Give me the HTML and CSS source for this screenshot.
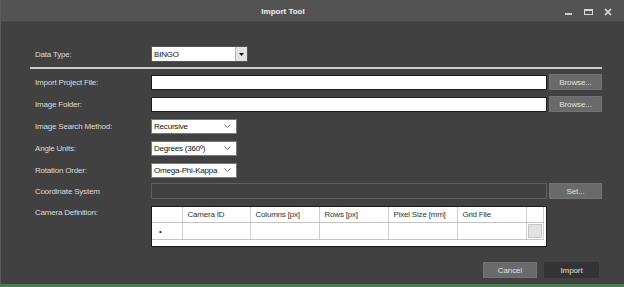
FILE: index.html
```html
<!DOCTYPE html>
<html lang="en">
<head>
    <meta charset="UTF-8">
    <title>Import Tool</title>
    <link rel="stylesheet" href="styles.css">
</head>
<body>

<div class="window">
    <div class="titlebar">
        <span class="title">Import Tool</span>
        <div class="controls">
            <svg width="8" height="8" viewBox="0 0 8 8"><rect x="0" y="5" width="7" height="2" fill="#cfcfcf"/></svg>
            <svg width="9" height="8" viewBox="0 0 9 8"><rect x="0.5" y="1.5" width="8" height="5" fill="none" stroke="#d8d8d8" stroke-width="1"/><rect x="0" y="1" width="9" height="2" fill="#d8d8d8"/></svg>
            <svg width="8" height="8" viewBox="0 0 8 8"><path d="M1 1 L7 7 M7 1 L1 7" stroke="#e0e0e0" stroke-width="1.6"/></svg>
        </div>
    </div>

    <div class="content">
        <div class="row">
            <label>Data Type:</label>
            <div class="combo combo-type">
                <span class="value">BINGO</span>
                <span class="drop"><svg width="5" height="3" viewBox="0 0 5 3"><path d="M0 0 H5 L2.5 3 Z" fill="#111"/></svg></span>
            </div>
        </div>

        <div class="sep"></div>

        <div class="row first">
            <label>Import Project File:</label>
            <div class="field"></div>
            <button class="btn">Browse...</button>
        </div>
        <div class="row">
            <label>Image Folder:</label>
            <div class="field"></div>
            <button class="btn">Browse...</button>
        </div>
        <div class="row">
            <label>Image Search Method:</label>
            <div class="combo combo-small">
                <span class="value">Recursive</span>
                <svg class="chev" width="7" height="4" viewBox="0 0 7 4"><path d="M0.5 0.5 L3.5 3.5 L6.5 0.5" fill="none" stroke="#6a6a6a" stroke-width="1"/></svg>
            </div>
        </div>
        <div class="row">
            <label>Angle Units:</label>
            <div class="combo combo-small">
                <span class="value">Degrees (360º)</span>
                <svg class="chev" width="7" height="4" viewBox="0 0 7 4"><path d="M0.5 0.5 L3.5 3.5 L6.5 0.5" fill="none" stroke="#6a6a6a" stroke-width="1"/></svg>
            </div>
        </div>
        <div class="row">
            <label>Rotation Order:</label>
            <div class="combo combo-small">
                <span class="value">Omega-Phi-Kappa</span>
                <svg class="chev" width="7" height="4" viewBox="0 0 7 4"><path d="M0.5 0.5 L3.5 3.5 L6.5 0.5" fill="none" stroke="#6a6a6a" stroke-width="1"/></svg>
            </div>
        </div>
        <div class="row tight">
            <label>Coordinate System</label>
            <div class="field field-off"></div>
            <button class="btn">Set...</button>
        </div>

        <div class="row row-table">
            <label>Camera Definition:</label>
            <div class="grid-wrap">
                <table class="grid">
                    <colgroup>
                        <col style="width:30px">
                        <col style="width:68px">
                        <col style="width:69px">
                        <col style="width:69px">
                        <col style="width:69px">
                        <col style="width:69px">
                        <col style="width:17px">
                        <col>
                    </colgroup>
                    <tr class="head">
                        <td></td>
                        <td>Camera ID</td>
                        <td>Columns [px]</td>
                        <td>Rows [px]</td>
                        <td>Pixel Size [mm]</td>
                        <td>Grid File</td>
                        <td></td>
                        <td class="blank"></td>
                    </tr>
                    <tr class="data">
                        <td class="rowhead">•</td>
                        <td></td>
                        <td></td>
                        <td></td>
                        <td></td>
                        <td></td>
                        <td class="cellbtn"><span></span></td>
                        <td class="blank"></td>
                    </tr>
                </table>
            </div>
        </div>

        <div class="actions">
            <button class="btn btn-cancel">Cancel</button>
            <button class="btn btn-import">Import</button>
        </div>
    </div>
</div>

</body>
</html>
```

FILE: styles.css
```css
body {
    margin: 0;
    padding: 0;
    background-color: #4d7a55;
    font-family: "Liberation Sans", Arial, sans-serif;
    font-size: 8px;
    letter-spacing: -0.2px;
}
.window {
    width: 623px;
    height: 284px;
    background-color: #414141;
    border-left: 1px solid #5c5c5c;
    overflow: hidden;
}
.titlebar {
    height: 22px;
    background-color: #535353;
    border-bottom: 1px solid #4a4a4a;
    box-sizing: border-box;
    display: flex;
    align-items: center;
}
.title {
    flex: 1;
    text-align: center;
    color: #f2f2f2;
    font-weight: bold;
    font-size: 8px;
    letter-spacing: 0;
    padding-top: 2px;
}
.controls {
    width: 59px;
    display: flex;
    align-items: center;
    gap: 11px;
    padding-top: 3px;
}
.content {
    padding: 24px 0 0 29px;
}
.row {
    display: grid;
    grid-template-columns: 119px 396px 53px;
    column-gap: 2px;
    align-items: center;
    height: 16px;
    margin-top: 6px;
}
.row:first-child {
    margin-top: 0;
}
.row.first,
.row.tight {
    margin-top: 5px;
}
.row label {
    color: #dcdcdc;
    padding-left: 5px;
}
.sep {
    width: 572px;
    height: 2px;
    background-color: #cdcdcd;
    margin-top: 5px;
}
.field {
    height: 15px;
    background-color: #fff;
    border: 1px solid #1c1c1c;
    box-sizing: border-box;
}
.field-off {
    height: 16px;
    background-color: #414141;
    border: 1px solid #5e5e5e;
}
.btn {
    height: 16px;
    padding: 0;
    background-color: #6a6a6a;
    border: 1px solid #737373;
    color: #e0e0e0;
    font-family: "Liberation Sans", Arial, sans-serif;
    font-size: 8px;
    letter-spacing: -0.1px;
    cursor: pointer;
}
.combo {
    height: 15px;
    background-color: #fff;
    border: 1px solid #7a7a7a;
    box-sizing: border-box;
    display: flex;
    align-items: center;
    color: #111;
}
.combo .value {
    flex: 1;
    padding-left: 2px;
}
.combo-type {
    width: 97px;
    height: 16px;
    border-color: #555;
}
.combo-type .drop {
    width: 11px;
    height: 100%;
    background-color: #e3e3e3;
    border-left: 1px solid #b8b8b8;
    display: flex;
    align-items: center;
    justify-content: center;
}
.combo-small {
    width: 86px;
}
.combo-small .chev {
    margin-right: 5px;
}
.row-table {
    height: 41px;
    align-items: start;
    margin-top: 7px;
}
.row-table label {
    padding-top: 2px;
}
.grid-wrap {
    height: 41px;
    background-color: #fff;
    border: 1px solid #1a1a1a;
    box-sizing: border-box;
}
.grid {
    width: 100%;
    table-layout: fixed;
    border-collapse: collapse;
    color: #333;
}
.grid td {
    height: 15px;
    padding: 0 0 0 5px;
    border-right: 1px solid #cfcfcf;
    white-space: nowrap;
    overflow: hidden;
}
.grid .head td {
    border-bottom: 1px solid #c4c4c4;
}
.grid .data td {
    border-bottom: 1px solid #c4c4c4;
}
.grid td.blank {
    border-right: none;
    border-bottom: none;
}
.grid .rowhead {
    padding-left: 7px;
    font-size: 8px;
    color: #222;
}
.grid .cellbtn {
    padding: 0;
}
.grid .cellbtn span {
    display: block;
    height: 12px;
    margin: 1px;
    background-color: #e2e2e2;
    border: 1px solid #c6c6c6;
}
.actions {
    display: flex;
    justify-content: flex-end;
    gap: 7px;
    width: 569px;
    margin-top: 15px;
}
.btn-cancel {
    width: 54px;
}
.btn-import {
    width: 55px;
    background-color: #333;
    border-color: #333;
}
```
